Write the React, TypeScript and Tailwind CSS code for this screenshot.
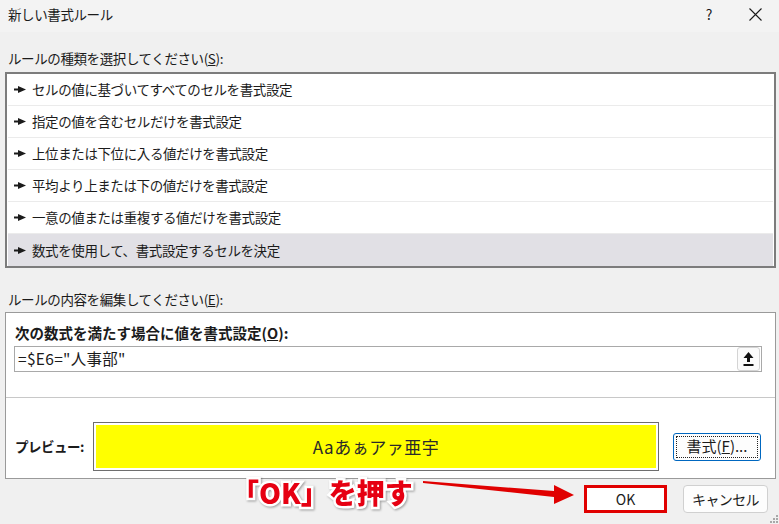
import React from 'react'

const rules = [
  'セルの値に基づいてすべてのセルを書式設定',
  '指定の値を含むセルだけを書式設定',
  '上位または下位に入る値だけを書式設定',
  '平均より上または下の値だけを書式設定',
  '一意の値または重複する値だけを書式設定',
  '数式を使用して、書式設定するセルを決定'
]

const Pointer = () => (
  <svg width="12" height="7" viewBox="0 0 12 7" className="shrink-0">
    <rect x="0" y="2.5" width="6" height="2" fill="#1b1b1b" />
    <polygon points="4,0 12,3.5 4,7" fill="#1b1b1b" />
  </svg>
)

const RuleRow = ({ text, selected, last }: { text: string; selected?: boolean; last?: boolean }) => (
  <div
    className={
      'h-[32px] flex items-center pl-[6px] gap-[6px] ' +
      (selected ? 'bg-[#e1e0e5] ' : '') +
      (last ? '' : 'border-b border-[#ebebeb]')
    }
  >
    <Pointer />
    <span className="tracking-[-0.4px]">{text}</span>
  </div>
)

const App = () => {
  return (
    <div className="relative w-[779px] h-[524px] overflow-hidden bg-[#f0f0f0] text-[#1b1b1b] text-[13.5px] font-['Noto_Sans_CJK_JP','Noto_Sans',sans-serif]">
      {/* title bar */}
      <div className="h-[32px] bg-[#f3f3f3] flex items-center pb-[4px]">
        <span className="pl-[8px] tracking-[-0.4px]">新しい書式ルール</span>
        <div className="ml-auto flex mr-px">
          <div className="w-[46px] flex justify-center text-[14px]">?</div>
          <div className="w-[46px] flex justify-center items-center">
            <svg width="13" height="13" viewBox="0 0 13 13">
              <path d="M0.5 0.5 L12.5 12.5 M12.5 0.5 L0.5 12.5" stroke="#1b1b1b" strokeWidth="1.1" />
            </svg>
          </div>
        </div>
      </div>

      <div className="pl-[5px] pr-[3px]">
        <div className="pt-[16px] pb-[4px] pl-[3px] leading-[20px] tracking-[-0.4px]">
          ルールの種類を選択してください(<span className="underline">S</span>):
        </div>

        <div className="border-2 border-[#7c7c7c] bg-white px-px">
          {rules.map((r, i) => (
            <RuleRow key={r} text={r} selected={i === rules.length - 1} last={i === rules.length - 1} />
          ))}
        </div>

        <div className="pt-[21px] pb-[3px] pl-[3px] leading-[20px] tracking-[-0.4px]">
          ルールの内容を編集してください(<span className="underline">E</span>):
        </div>

        <div className="border border-[#9a9a9a] bg-white">
          <div className="pt-[10px] pl-[9px] text-[14.5px] font-bold leading-[20px]">
            次の数式を満たす場合に値を書式設定(<span className="underline">O</span>):
          </div>
          <div className="mt-[3px] ml-[8px] mr-[13px] h-[26px] border border-[#a9a9a9] flex items-center">
            <span className="pl-[3px] text-[15.5px] tracking-[0.3px]">=$E6="人事部"</span>
            <div className="ml-auto mr-px h-[24px] w-[23px] border border-[#d4d4d4] rounded-[3px] bg-[#fbfbfb] flex items-center justify-center">
              <svg width="11" height="14" viewBox="0 0 11 14">
                <polygon points="5.5,0 10.5,6 7,6 7,10 4,10 4,6 0.5,6" fill="#111" />
                <rect x="0.5" y="12" width="10" height="2" fill="#111" />
              </svg>
            </div>
          </div>
          <div className="mt-[25px] border-t border-[#c8c8c8]" />
          <div className="mt-[24px] mb-[7px] flex items-center">
            <div className="w-[87px] pl-[9px] font-bold text-[13.5px] tracking-[-0.5px]">プレビュー:</div>
            <div className="w-[566px] h-[49px] border border-[#6e6e6e] p-[2px]">
              <div className="h-full bg-[#ffff00] flex items-center justify-center text-[17px] text-[#2a2a2a] tracking-[0.5px]">
                Aaあぁアァ亜宇
              </div>
            </div>
            <div className="ml-[14px] w-[88px] h-[28px] rounded-[3px] border border-[#0067c0] bg-[#fdfdfd] p-[2px]">
              <div className="h-full border border-dotted border-[#222] flex items-center justify-center text-[15px]">
                書式(<span className="underline">F</span>)...
              </div>
            </div>
          </div>
        </div>

        <div className="mt-[6px] flex justify-end">
          <div className="w-[83px] h-[28px] border-[3px] border-[#e00000] bg-white flex items-center justify-center text-[14px]">
            OK
          </div>
          <div className="ml-[16px] mr-[8px] w-[85px] h-[28px] rounded-[4px] border border-[#d0d0d0] bg-[#fdfdfd] flex items-center justify-center text-[14px] tracking-[-0.6px]">
            キャンセル
          </div>
        </div>
      </div>

      {/* annotation */}
      <div className="absolute left-[231px] top-[473px] text-[28px] leading-[38px] font-black text-[#e60012] [-webkit-text-stroke:5px_white] [paint-order:stroke_fill] drop-shadow-[1px_1px_1px_rgba(0,0,0,0.35)]">
        「OK」を押す
      </div>
      <svg className="absolute left-[420px] top-[478px]" width="160" height="32" viewBox="0 0 160 32">
        <polygon points="3,3 134,13 134,7 154,17 134,26 134,19 3,5" fill="#e00000" />
      </svg>

      {/* resize grip */}
      <svg className="absolute right-[1px] bottom-[1px]" width="8" height="8" viewBox="0 0 8 8">
        <rect x="6" y="0" width="2" height="2" fill="#a8a8a8" />
        <rect x="3" y="3" width="2" height="2" fill="#a8a8a8" />
        <rect x="6" y="3" width="2" height="2" fill="#a8a8a8" />
        <rect x="0" y="6" width="2" height="2" fill="#a8a8a8" />
        <rect x="3" y="6" width="2" height="2" fill="#a8a8a8" />
        <rect x="6" y="6" width="2" height="2" fill="#a8a8a8" />
      </svg>
    </div>
  )
}

export default App
